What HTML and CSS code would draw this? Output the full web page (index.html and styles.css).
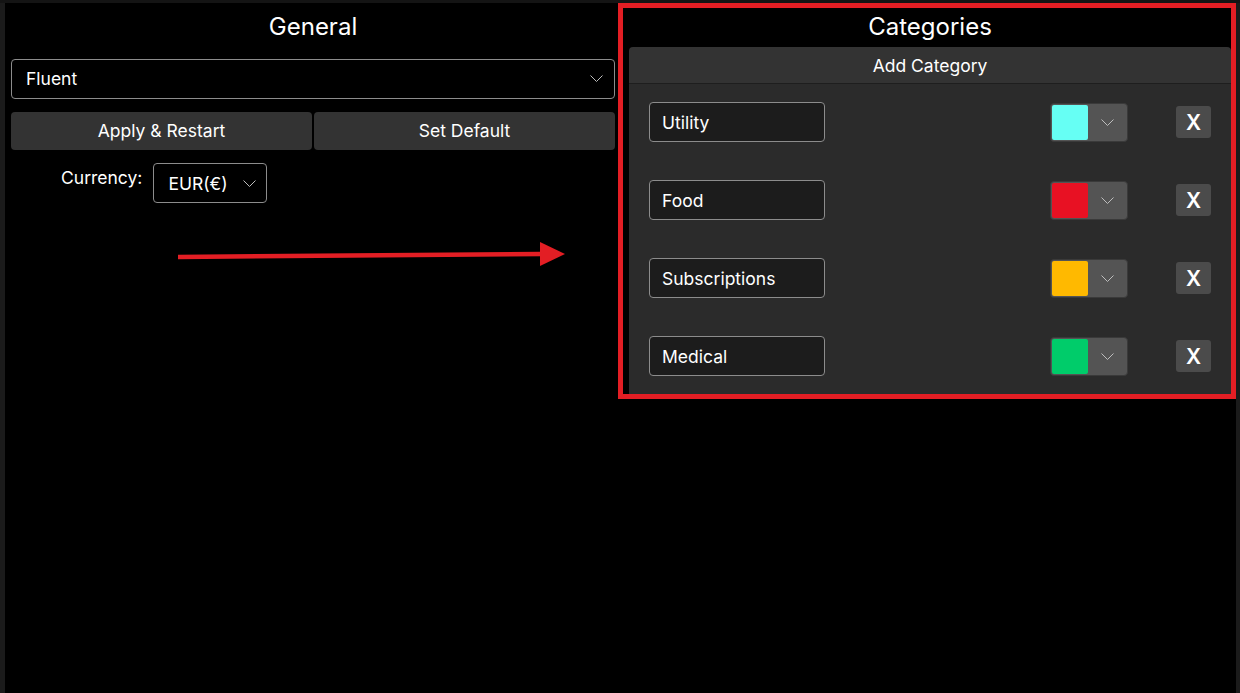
FILE: index.html
```html
<!DOCTYPE html>
<html lang="en">
<head>
<meta charset="utf-8">
<title>Settings</title>
<link rel="stylesheet" href="styles.css">
</head>
<body>
<div class="app">
  <div class="edge edge-left"></div>
  <section class="col general">
    <h2 class="title">General</h2>
    <div class="select wide">
      <span>Fluent</span>
      <svg class="chev" viewBox="0 0 13 7" width="13" height="7"><polyline points="0.5,0.5 6.5,6.5 12.5,0.5"/></svg>
    </div>
    <div class="btn-row">
      <button class="btn">Apply &amp; Restart</button>
      <button class="btn">Set Default</button>
    </div>
    <div class="currency">
      <span class="label">Currency:</span>
      <div class="select small">
        <span>EUR(€)</span>
        <svg class="chev" viewBox="0 0 13 7" width="13" height="7"><polyline points="0.5,0.5 6.5,6.5 12.5,0.5"/></svg>
      </div>
    </div>
  </section>
  <section class="col categories">
    <h2 class="title">Categories</h2>
    <button class="add">Add Category</button>
    <div class="list">
      <div class="row">
        <div class="tb">Utility</div>
        <div class="picker"><span class="swatch" style="background:#66fff4"></span><svg class="chev" viewBox="0 0 13 7" width="13" height="7"><polyline points="0.5,0.5 6.5,6.5 12.5,0.5"/></svg></div>
        <button class="del">X</button>
      </div>
      <div class="row">
        <div class="tb">Food</div>
        <div class="picker"><span class="swatch" style="background:#e81123"></span><svg class="chev" viewBox="0 0 13 7" width="13" height="7"><polyline points="0.5,0.5 6.5,6.5 12.5,0.5"/></svg></div>
        <button class="del">X</button>
      </div>
      <div class="row">
        <div class="tb">Subscriptions</div>
        <div class="picker"><span class="swatch" style="background:#ffb900"></span><svg class="chev" viewBox="0 0 13 7" width="13" height="7"><polyline points="0.5,0.5 6.5,6.5 12.5,0.5"/></svg></div>
        <button class="del">X</button>
      </div>
      <div class="row">
        <div class="tb">Medical</div>
        <div class="picker"><span class="swatch" style="background:#00cc6a"></span><svg class="chev" viewBox="0 0 13 7" width="13" height="7"><polyline points="0.5,0.5 6.5,6.5 12.5,0.5"/></svg></div>
        <button class="del">X</button>
      </div>
    </div>
  </section>
  <div class="edge edge-right"></div>
</div>
<svg class="arrow" viewBox="0 0 400 40" width="400" height="40">
  <line x1="8" y1="21" x2="372" y2="18"/>
  <polygon points="370,6 395,18 370,30"/>
</svg>
</body>
</html>
```

FILE: styles.css
```css
* { box-sizing: border-box; }
html, body { margin: 0; padding: 0; }
body {
  background: #000;
  width: 1240px;
  height: 693px;
  overflow: hidden;
  font-family: Inter, "Noto Sans", sans-serif;
  color: #fff;
  position: relative;
}
.app {
  display: flex;
  align-items: flex-start;
  height: 693px;
  border-top: 3px solid #141414;
}
.edge { align-self: stretch; background: #1b1b1b; }
.edge-left { width: 5px; }
.edge-right { width: 4px; }

.col { display: flex; flex-direction: column; }
.title {
  margin: 0;
  font-size: 24px;
  font-weight: 400;
  line-height: 37px;
  padding-bottom: 2px;
  text-align: center;
}

/* General */
.general {
  width: 613px;
  padding: 5px 3px 0 6px;
}
.select {
  display: flex;
  align-items: center;
  justify-content: space-between;
  height: 40px;
  border: 1px solid #8c8c8c;
  border-radius: 4px;
  background: #000;
  font-size: 17.5px;
}
.chev polyline { fill: none; stroke: #bdbdbd; stroke-width: 1; }
.select.wide { margin-top: 12px; padding: 0 11px 1px 14px; }
.select.small { width: 114px; padding: 0 10px 0 14px; }
.btn-row {
  display: flex;
  gap: 2px;
  margin-top: 13px;
}
.btn {
  flex: 1;
  height: 38px;
  border: 0;
  border-radius: 4px;
  background: #333;
  color: #fff;
  font: 17.5px Inter, "Noto Sans", sans-serif;
  padding: 0 0 1px;
}
.currency {
  display: flex;
  align-items: flex-start;
  gap: 11px;
  margin-top: 13px;
  padding-left: 50px;
}
.label {
  font-size: 17.5px;
  line-height: 24px;
  padding-top: 3px;
}

/* Categories */
.categories {
  width: 618px;
  height: 396px;
  border: 5px solid #e31e24;
  padding-left: 6px;
  overflow: hidden;
}
.add {
  height: 37px;
  border: 0;
  border-bottom: 1px solid #1e1e1e;
  border-radius: 4px 4px 0 0;
  background: #333;
  color: #fff;
  font: 17.5px Inter, "Noto Sans", sans-serif;
  padding: 0;
}
.list {
  flex: 1;
  background: #2b2b2b;
  padding: 18px 20px;
  display: flex;
  flex-direction: column;
  gap: 38px;
}
.row {
  display: flex;
  align-items: center;
  height: 40px;
}
.tb {
  width: 176px;
  height: 40px;
  display: flex;
  align-items: center;
  padding-left: 12px;
  background: #1c1c1c;
  border: 1px solid #8c8c8c;
  border-radius: 4px;
  font-size: 17.5px;
}
.picker {
  margin-left: auto;
  width: 78px;
  height: 39px;
  display: flex;
  align-items: center;
  background: #545454;
  border: 1px solid #3a3a3a;
  border-radius: 4px;
  padding: 1px;
}
.swatch {
  width: 36px;
  height: 100%;
  border-radius: 2px;
}
.picker .chev { margin: 0 auto; }
.del {
  margin-left: 48px;
  width: 35px;
  height: 32px;
  border: 0;
  border-radius: 3px;
  background: #4b4b4b;
  color: #fff;
  font: 600 21px Inter, "Noto Sans", sans-serif;
  padding: 0;
}

/* annotation arrow */
.arrow {
  position: absolute;
  left: 170px;
  top: 236px;
}
.arrow line { stroke: #e31e24; stroke-width: 4.5; }
.arrow polygon { fill: #e31e24; }
```
